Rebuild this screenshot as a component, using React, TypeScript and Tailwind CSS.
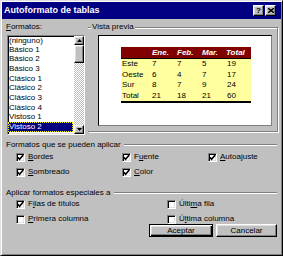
import React from "react";

const raised =
  "border border-t-white border-l-white border-r-black border-b-black shadow-[inset_-1px_-1px_#808080,inset_1px_1px_#dfdfdf] bg-[#c0c0c0]";
const sunken =
  "border border-t-[#808080] border-l-[#808080] border-r-white border-b-white shadow-[inset_1px_1px_#000,inset_-1px_-1px_#dfdfdf]";
const dither =
  "bg-[repeating-conic-gradient(#ffffff_0_25%,#c0c0c0_0_50%)] bg-[length:2px_2px]";

// alturas de fila de la lista (px enteros para que el texto no quede a medio píxel)
const formatos = [
  { name: "(ninguno)", tall: false },
  { name: "Básico 1", tall: false },
  { name: "Básico 2", tall: true },
  { name: "Básico 3", tall: true },
  { name: "Clásico 1", tall: false },
  { name: "Clásico 2", tall: true },
  { name: "Clásico 3", tall: true },
  { name: "Clásico 4", tall: false },
  { name: "Vistoso 1", tall: true },
  { name: "Vistoso 2", tall: true },
];

const rows = [
  ["Este", "7", "7", "5", "19"],
  ["Oeste", "6", "4", "7", "17"],
  ["Sur", "8", "7", "9", "24"],
  ["Total", "21", "18", "21", "60"],
];

function Label({ pre = "", u, post = "" }: { pre?: string; u: string; post?: string }) {
  return (
    <span className="whitespace-nowrap">
      {pre}
      <span className="underline underline-offset-1">{u}</span>
      {post}
    </span>
  );
}

function Check({ checked, children }: { checked: boolean; children: React.ReactNode }) {
  return (
    <div className="flex items-center gap-[3px] h-[10px]">
      <div className={`${sunken} bg-white w-[9px] h-[9px] flex items-center justify-center shrink-0`}>
        {checked && (
          <svg width="7" height="7" viewBox="0 0 7 7">
            <path d="M0.8 3.2 L2.6 5.2 L6.2 1" fill="none" stroke="#000" strokeWidth="1.6" />
          </svg>
        )}
      </div>
      {children}
    </div>
  );
}

function Separator({ text }: { text: string }) {
  return (
    <div className="flex items-center h-[10px] ml-[4px] mr-[4px]">
      <span className="whitespace-nowrap">{text}</span>
      <div className="flex-1 ml-[3px] h-[2px] border-t border-t-[#808080] border-b border-b-white" />
    </div>
  );
}

function Arrow({ up }: { up: boolean }) {
  return (
    <svg width="5" height="3" viewBox="0 0 5 3">
      <polygon points={up ? "2.5,0 5,3 0,3" : "0,0 5,0 2.5,3"} fill="#000" />
    </svg>
  );
}

export default function App() {
  return (
    <div className="w-[283px] h-[256px] overflow-hidden bg-[#c0c0c0] border border-t-[#dfdfdf] border-l-[#dfdfdf] border-r-black border-b-black shadow-[inset_1px_1px_#fff,inset_-1px_-1px_#808080] p-[1px] [font-family:'Liberation_Sans',Arial,sans-serif] text-[8px] leading-[10px] text-black flex flex-col select-none">
      {/* barra de título */}
      <div className="h-[17px] shrink-0 bg-[#000080] flex items-center pl-[2px] pr-[5px]">
        <span className="flex-1 text-white font-bold text-[9px] leading-[11px]">Autoformato de tablas</span>
        <div className="flex">
          <div className={`${raised} w-[11px] h-[11px] flex items-center justify-center font-bold text-[8px] leading-[8px]`}>
            ?
          </div>
          <div className={`${raised} w-[11px] h-[11px] flex items-center justify-center ml-[1px]`}>
            <svg width="6" height="5" viewBox="0 0 6 5">
              <path d="M0 0 L6 5 M6 0 L0 5" stroke="#000" strokeWidth="1.4" />
            </svg>
          </div>
        </div>
      </div>

      {/* formatos + vista previa */}
      <div className="flex mt-[2px]">
        <div className="ml-[4px] w-[79px] shrink-0">
          <div className="h-[12px] leading-[12px]">
            <Label u="F" post="ormatos:" />
          </div>
          <div className={`${sunken} bg-white ml-[1px] mt-[2px] w-[78px] h-[100px] flex`}>
            <div className="flex-1 flex flex-col text-black">
              {formatos.map((f, i) =>
                i === formatos.length - 1 ? (
                  <div
                    key={f.name}
                    className="h-[10px] leading-[10px] bg-[#000080] text-white outline outline-dotted outline-[#ffff00] -outline-offset-1 pl-[1px] mr-[1px] whitespace-nowrap"
                  >
                    {f.name}
                  </div>
                ) : (
                  <div
                    key={f.name}
                    className={`${f.tall ? "h-[10px] leading-[10px]" : "h-[9px] leading-[9px]"} pl-[1px] whitespace-nowrap`}
                  >
                    {f.name}
                  </div>
                )
              )}
            </div>
            <div className="w-[10px] flex flex-col">
              <div className={`${raised} h-[9px] flex items-center justify-center`}>
                <Arrow up />
              </div>
              <div className={`${raised} h-[18px]`} />
              <div className={`flex-1 ${dither}`} />
              <div className={`${raised} h-[9px] flex items-center justify-center`}>
                <Arrow up={false} />
              </div>
            </div>
          </div>
        </div>

        <div className="ml-[3px] w-[190px] mt-[6px]">
          <div className="relative h-[105px] border-t border-r border-b border-[#808080] shadow-[inset_0_1px_#fff,1px_1px_#fff] pt-[7px] pl-[10px]">
            <span className="absolute -top-[6px] left-[3px] bg-[#c0c0c0] px-[1px]">Vista previa</span>
            <div className="w-[174px] h-[91px] bg-white border border-black border-r-[#808080] border-b-[#808080] pl-[22px] pt-[11px]">
              <div className="w-[130px] border-b-2 border-black">
                <div className="grid grid-cols-[30px_25px_25px_25px_25px] h-[12px] bg-[#800000] border-b border-black text-white font-bold italic leading-[11px]">
                  <span />
                  <span className="pl-[1px]">Ene.</span>
                  <span className="pl-[1px]">Feb.</span>
                  <span className="pl-[1px]">Mar.</span>
                  <span>Total</span>
                </div>
                <div className="bg-[#ffffa0]">
                  {rows.map((r, i) => (
                    <div
                      key={r[0]}
                      className={`grid grid-cols-[30px_25px_25px_25px_25px] ${i % 2 === 0 ? "h-[10px] leading-[10px]" : "h-[11px] leading-[11px]"}`}
                    >
                      {r.map((c, j) => (
                        <span key={j} className="pl-[1px]">
                          {c}
                        </span>
                      ))}
                    </div>
                  ))}
                </div>
              </div>
            </div>
          </div>
        </div>
      </div>

      {/* formatos que se pueden aplicar */}
      <div className="mt-[5px]">
        <Separator text="Formatos que se pueden aplicar" />
      </div>
      <div className="flex pl-[14px] mt-[2px]">
        <div className="w-[106px] flex flex-col gap-[5px]">
          <Check checked>
            <Label u="B" post="ordes" />
          </Check>
          <Check checked>
            <Label u="S" post="ombreado" />
          </Check>
        </div>
        <div className="w-[86px] flex flex-col gap-[5px]">
          <Check checked>
            <Label pre="F" u="u" post="ente" />
          </Check>
          <Check checked>
            <Label u="C" post="olor" />
          </Check>
        </div>
        <div className="flex flex-col">
          <Check checked>
            <Label u="A" post="utoajuste" />
          </Check>
        </div>
      </div>

      {/* aplicar formatos especiales */}
      <div className="mt-[11px]">
        <Separator text="Aplicar formatos especiales a" />
      </div>
      <div className="flex pl-[14px] mt-[1px]">
        <div className="w-[151px] flex flex-col gap-[5px]">
          <Check checked>
            <Label pre="F" u="i" post="las de títulos" />
          </Check>
          <Check checked={false}>
            <Label u="P" post="rimera columna" />
          </Check>
        </div>
        <div className="flex flex-col gap-[5px]">
          <Check checked={false}>
            <Label pre="Últi" u="m" post="a fila" />
          </Check>
          <Check checked={false}>
            <Label pre="Ú" u="l" post="tima columna" />
          </Check>
        </div>
      </div>

      {/* botones */}
      <div className="flex justify-end gap-[3px] mr-[4px]">
        <div className="w-[64px] h-[13px] border border-black bg-[#c0c0c0] shadow-[inset_1px_1px_#fff,inset_-1px_-1px_#000,inset_-2px_-2px_#808080,inset_2px_2px_#dfdfdf] flex items-center justify-center">
          Aceptar
        </div>
        <div className={`${raised} w-[61px] h-[13px] flex items-center justify-center`}>Cancelar</div>
      </div>
    </div>
  );
}
